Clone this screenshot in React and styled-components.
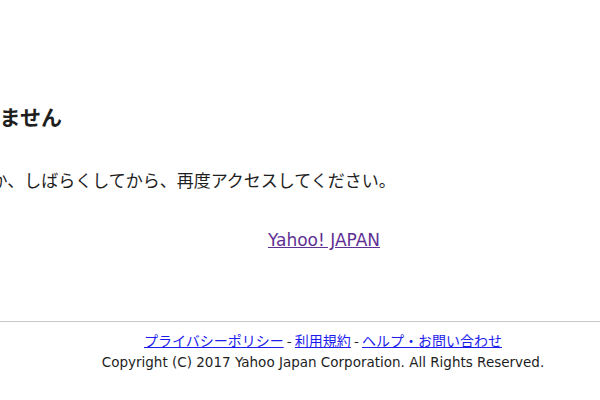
import React from 'react';
import styled, { createGlobalStyle } from 'styled-components';

const GlobalStyle = createGlobalStyle`
  html, body {
    margin: 0;
    padding: 0;
    background: #fff;
    overflow: hidden;
  }
  body {
    font-family: "DejaVu Sans", "Noto Sans CJK JP", sans-serif;
    color: #1e1e1e;
  }
`;

// the page is wider than the window and centred a little right of it,
// so the start of the heading and message falls off the left edge
const Page = styled.div`
  width: 986px;
  margin-left: -170px;
  padding-top: 103px;
`;

const Main = styled.div`
  padding-left: 2px;
`;

const Title = styled.h1`
  margin: 0;
  font-size: 21px;
  line-height: 26px;
  font-weight: bold;
  font-family: "Noto Sans CJK JP", sans-serif;
`;

const Message = styled.p`
  margin: 39px 0 0;
  text-indent: -11px;
  font-size: 17px;
  line-height: 24px;
  font-family: "Noto Sans CJK JP", sans-serif;
`;

const TopLink = styled.p`
  margin: 36px 0 0;
  text-align: center;
  font-size: 17px;
  line-height: 24px;
`;

const Link = styled.a`
  color: ${(props) => (props.$visited ? '#5f3093' : '#1c1cec')};
  text-decoration: underline;
`;

const Footer = styled.div`
  margin-top: 69px;
  border-top: 1px solid #c8c8c8;
  padding-top: 8px;
  text-align: center;
  line-height: 20px;
`;

const FooterLinks = styled.div`
  font-size: 14px;
  font-family: "Noto Sans CJK JP", sans-serif;
`;

const Copyright = styled.div`
  margin-top: 2px;
  font-size: 13.5px;
`;

function App() {
  return (
    <>
      <GlobalStyle />
      <Page>
        <Main>
          <Title>ページを表示できません</Title>
          <Message>
            ただいま混雑しているか、しばらくしてから、再度アクセスしてください。
          </Message>
          <TopLink>
            <Link href="#" $visited>Yahoo! JAPAN</Link>
          </TopLink>
        </Main>
        <Footer>
          <FooterLinks>
            <Link href="#">プライバシーポリシー</Link> - <Link href="#">利用規約</Link> -{' '}
            <Link href="#">ヘルプ・お問い合わせ</Link>
          </FooterLinks>
          <Copyright>Copyright (C) 2017 Yahoo Japan Corporation. All Rights Reserved.</Copyright>
        </Footer>
      </Page>
    </>
  );
}

export default App;
